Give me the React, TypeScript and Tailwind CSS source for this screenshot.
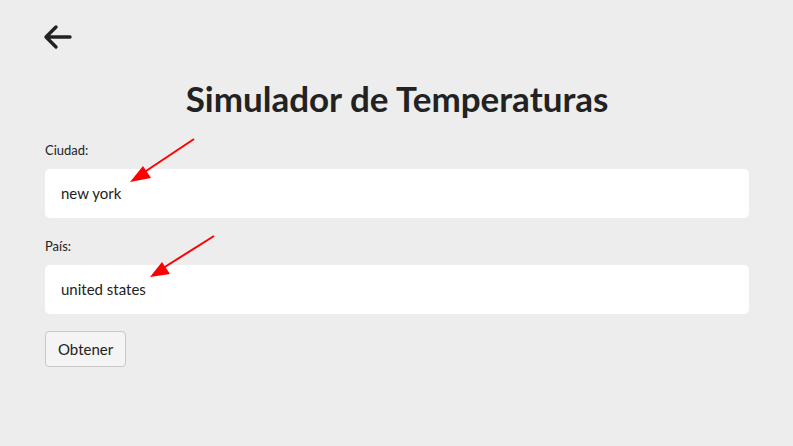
import React from "react";

export default function App() {
  return (
    <div className="relative min-h-[446px] w-full bg-[#ededed] text-[#222] pl-[45px] pr-[44px]" style={{ fontFamily: "Lato, 'Noto Sans', sans-serif" }}>
      <div className="pt-[24px] h-[70px]">
        <svg width="30" height="26" viewBox="0 0 30 26" className="-ml-[2px]">
          <path d="M27 13H4M13 3L3 13l10 10" fill="none" stroke="#222" strokeWidth="3.4" strokeLinecap="round" strokeLinejoin="round" />
        </svg>
      </div>
      <h1 className="text-center text-[35px] font-bold leading-[40px] mt-[8px]">Simulador de Temperaturas</h1>
      <div className="mt-[23px]">
        <label className="block text-[13px] leading-[18px]">Ciudad:</label>
        <div className="mt-[10px] h-[49px] bg-white rounded-[5px] flex items-center px-[16px] text-[15px]">new york</div>
      </div>
      <div className="mt-[19px]">
        <label className="block text-[13px] leading-[18px]">País:</label>
        <div className="mt-[10px] h-[49px] bg-white rounded-[5px] flex items-center px-[16px] text-[15px]">united states</div>
      </div>
      <button className="mt-[17px] h-[36px] px-[12px] bg-[#f4f4f4] border border-[#c8c8c8] rounded-[4px] text-[15px]">Obtener</button>
      <svg className="absolute left-0 top-0 pointer-events-none" width="793" height="446">
        <g stroke="#f00" strokeWidth="2" fill="#f00">
          <line x1="194" y1="139" x2="140" y2="175" />
          <polygon points="130,182 143,166 151,178" stroke="none" />
          <line x1="214" y1="236" x2="160" y2="270" />
          <polygon points="150,277 162,262 170,274" stroke="none" />
        </g>
      </svg>
    </div>
  );
}
